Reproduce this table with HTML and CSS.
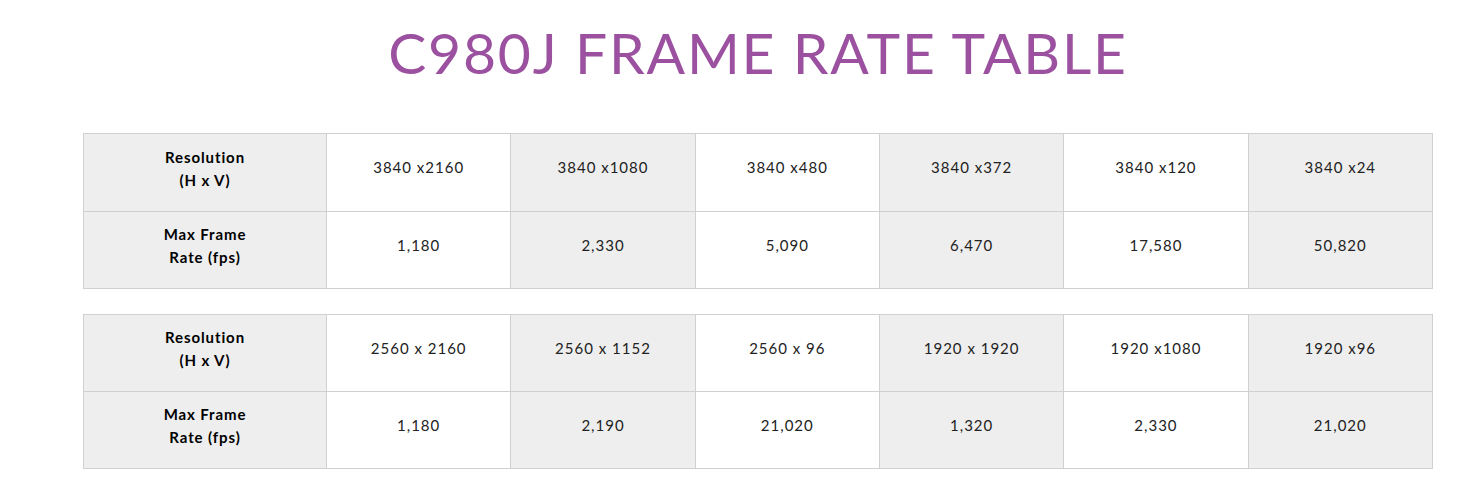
FILE: index.html
```html
<!DOCTYPE html>
<html>
<head>
<meta charset="utf-8">
<link rel="stylesheet" href="styles.css">
</head>
<body>
<div class="page">
  <h1 class="title">C980J FRAME RATE TABLE</h1>
  <table class="rates">
    <colgroup><col class="c-head"><col><col><col><col><col><col></colgroup>
    <tr class="r1">
      <th>Resolution<br>(H x V)</th>
      <td>3840 x2160</td><td class="g">3840 x1080</td><td>3840 x480</td><td class="g">3840 x372</td><td>3840 x120</td><td class="g">3840 x24</td>
    </tr>
    <tr>
      <th>Max Frame<br>Rate (fps)</th>
      <td>1,180</td><td class="g">2,330</td><td>5,090</td><td class="g">6,470</td><td>17,580</td><td class="g">50,820</td>
    </tr>
  </table>
  <table class="rates">
    <colgroup><col class="c-head"><col><col><col><col><col><col></colgroup>
    <tr>
      <th>Resolution<br>(H x V)</th>
      <td>2560 x 2160</td><td class="g">2560 x 1152</td><td>2560 x 96</td><td class="g">1920 x 1920</td><td>1920 x1080</td><td class="g">1920 x96</td>
    </tr>
    <tr>
      <th>Max Frame<br>Rate (fps)</th>
      <td>1,180</td><td class="g">2,190</td><td>21,020</td><td class="g">1,320</td><td>2,330</td><td class="g">21,020</td>
    </tr>
  </table>
</div>
</body>
</html>
```
FILE: styles.css
```css
html, body { margin: 0; padding: 0; background: #fff; }
body { font-family: Lato, "Liberation Sans", sans-serif; color: #222; }
.page { width: 1350px; margin-left: 83px; }
.title {
  margin: 0;
  padding-top: 17px;
  height: 133px;
  box-sizing: border-box;
  text-align: center;
  font-weight: 400;
  font-size: 57px;
  line-height: 70px;
  color: #9b51a0;
  letter-spacing: 1.8px;
}
.rates {
  width: 1350px;
  table-layout: fixed;
  border-collapse: collapse;
  margin-bottom: 25px;
}
.rates .c-head { width: 243px; }
.rates th, .rates td {
  border: 1px solid #d0d0d0;
  text-align: center;
  vertical-align: middle;
  height: 77px;
  padding: 0;
  font-size: 15px;
  line-height: 23px;
  box-sizing: border-box;
}
.rates .r1 th, .rates .r1 td { height: 78px; }
.rates th {
  background: #eeeeee;
  font-weight: 700;
  font-size: 15px;
  letter-spacing: 0.9px;
  color: #000;
  padding-bottom: 8px;
}
.rates td { letter-spacing: 1px; padding-bottom: 10px; }
.rates td.g { background: #eeeeee; }
```
